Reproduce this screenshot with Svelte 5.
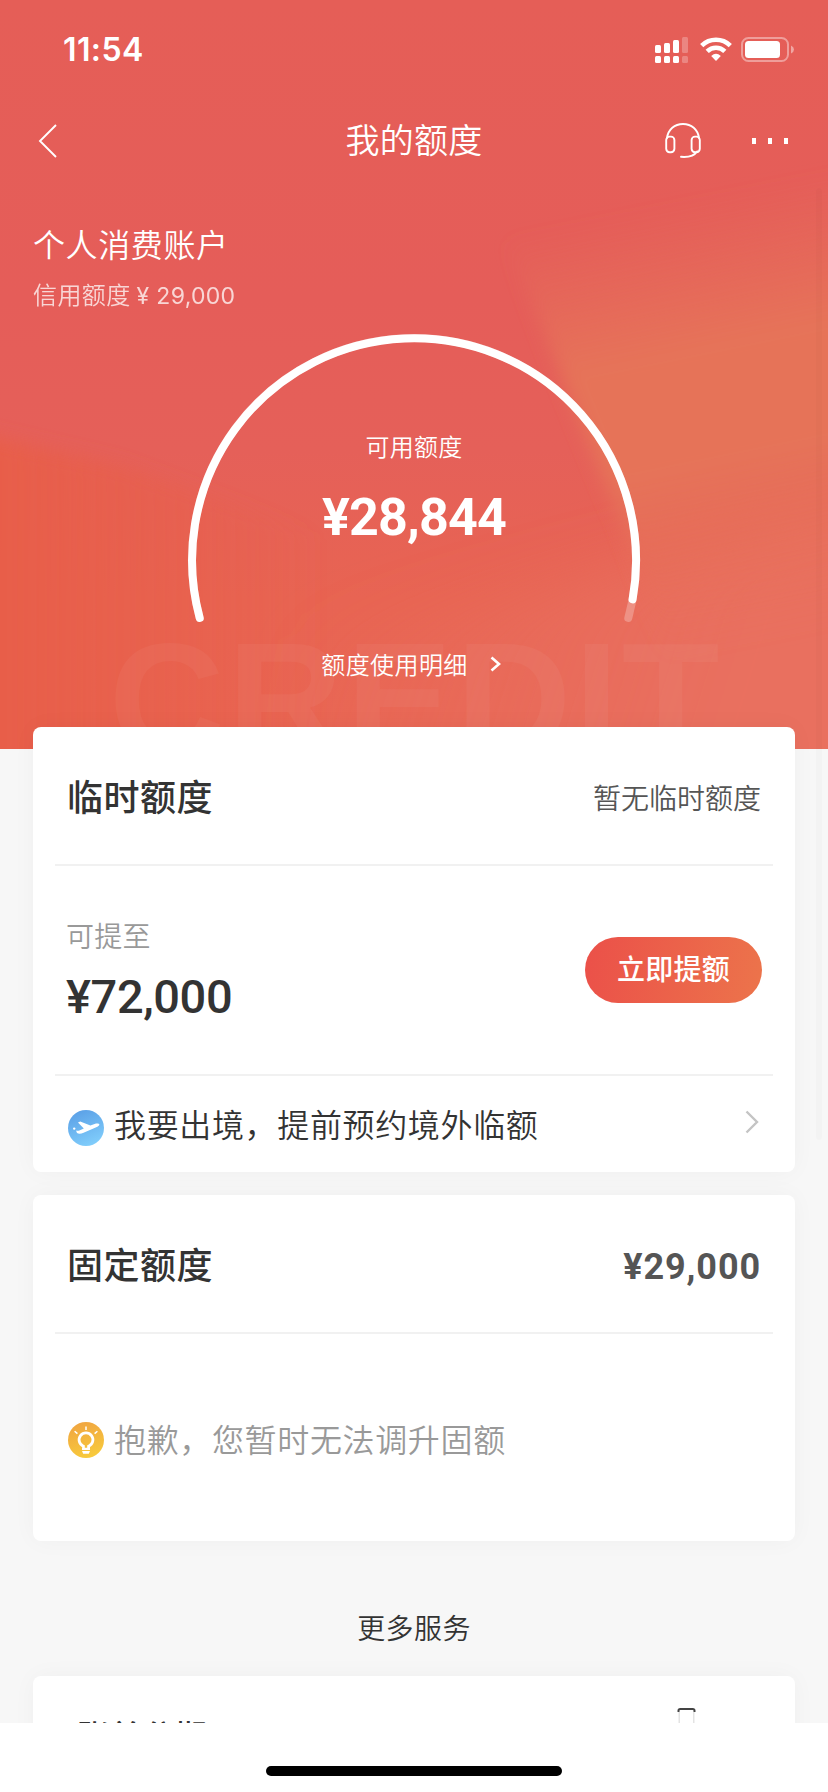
<script>
  const total = 29000
  const available = 28844

  const yuan = (n) => '¥' + n.toLocaleString('en-US')

  // barras de cobertura
  const bars = [
    { x: 0, top: 8, on: true },
    { x: 9, top: 6, on: true },
    { x: 18, top: 3, on: true },
    { x: 27, top: 0, on: false }
  ]
</script>

{#snippet chevron(w, h, stroke)}
  <svg width={w} height={h} viewBox="0 0 {w} {h}" fill="none" stroke="currentColor" stroke-width={stroke}>
    <path d="M1.5 1.5 L{w - 2} {h / 2} L1.5 {h - 1.5}" />
  </svg>
{/snippet}

<main class="screen">
  <section class="hero">
    <svg class="hero-bg" viewBox="0 0 828 749" preserveAspectRatio="none" aria-hidden="true">
      <defs>
        <linearGradient id="base" x1="0" y1="0" x2="0" y2="1">
          <stop offset="0" stop-color="#e55e57" />
          <stop offset="0.4" stop-color="#e55d59" />
          <stop offset="0.6" stop-color="#e56059" />
          <stop offset="0.8" stop-color="#e86452" />
          <stop offset="1" stop-color="#e96552" />
        </linearGradient>
        <linearGradient id="left" x1="0" y1="0" x2="1" y2="0">
          <stop offset="0.1" stop-color="#e85e49" />
          <stop offset="0.8" stop-color="#e85e49" stop-opacity="0" />
        </linearGradient>
        <linearGradient id="right" gradientUnits="userSpaceOnUse" x1="520" y1="235" x2="625" y2="749">
          <stop offset="0" stop-color="#e6705a" stop-opacity="0" />
          <stop offset="0.28" stop-color="#e67359" />
          <stop offset="0.5" stop-color="#e67359" />
          <stop offset="0.85" stop-color="#e86e5a" stop-opacity="0" />
        </linearGradient>
        <linearGradient id="corner" gradientUnits="userSpaceOnUse" x1="330" y1="520" x2="720" y2="640">
          <stop offset="0" stop-color="#e96f5f" stop-opacity="0" />
          <stop offset="1" stop-color="#e96f5f" />
        </linearGradient>
        <filter id="soft" x="-20%" y="-20%" width="140%" height="140%">
          <feGaussianBlur stdDeviation="9" />
        </filter>
        <filter id="softer" x="-30%" y="-30%" width="160%" height="160%">
          <feGaussianBlur stdDeviation="30" />
        </filter>
      </defs>
      <rect width="828" height="749" fill="url(#base)" />
      <path d="M-60 425 L120 465 L420 570 L420 830 L-60 830 Z" fill="url(#left)" filter="url(#soft)" />
      <path d="M300 640 L640 560 L920 470 L920 860 L300 860 Z" fill="url(#corner)" filter="url(#softer)" />
      <path d="M500 225 L640 165 L880 140 L880 790 L712 790 L620 520 L545 335 Z" fill="url(#right)" filter="url(#soft)" />
    </svg>
    <span class="watermark" aria-hidden="true">CREDIT</span>

    <div class="statusbar">
      <span class="time">11:54</span>
      <div class="status-icons">
        <svg width="33" height="27" viewBox="0 0 33 27" fill="#fff">
          {#each bars as b}
            <g opacity={b.on ? 1 : 0.25}>
              <rect x={b.x} y={b.top} width="6" height={16 - b.top} rx="1.5" />
              <rect x={b.x} y="19" width="6" height="7" rx="1.5" />
            </g>
          {/each}
        </svg>
        <svg class="wifi" width="32" height="24" viewBox="0 0 32 24" fill="none" stroke="#fff" stroke-width="4.6">
          <path d="M1.7 8.6 A20.5 20.5 0 0 1 30.3 8.6" />
          <path d="M7.2 14.4 A12.6 12.6 0 0 1 24.8 14.4" />
          <path d="M16 24 L11.2 18.9 Q16 14.8 20.8 18.9 Z" fill="#fff" stroke="none" />
        </svg>
        <svg class="battery" width="54" height="25" viewBox="0 0 54 25">
          <rect x="1" y="1" width="46" height="23" rx="6.5" fill="none" stroke="#fff" stroke-opacity="0.4" stroke-width="2" />
          <rect x="4" y="4" width="35" height="17" rx="3.5" fill="#fff" />
          <path d="M50 8.5 Q53 10 53 12.5 Q53 15 50 16.5 Z" fill="#fff" fill-opacity="0.45" />
        </svg>
      </div>
    </div>

    <nav class="navbar">
      <button class="icon-btn back" aria-label="返回">
        <svg width="20" height="34" viewBox="0 0 20 34" fill="none" stroke="#fff" stroke-width="1.9">
          <path d="M18 1 L2 17 L18 33" />
        </svg>
      </button>
      <h1>我的额度</h1>
      <div class="nav-actions">
        <button class="icon-btn" aria-label="客服">
          <svg width="38" height="38" viewBox="0 0 38 38" fill="none" stroke="#fff" stroke-width="1.9" stroke-linecap="round">
            <path d="M3 16 C4.2 7.5 10.5 2 19 2 C27.5 2 33.8 7.5 35 16" />
            <rect x="2.2" y="14.6" width="8.2" height="15.6" rx="3.4" />
            <rect x="27.6" y="14.6" width="8.2" height="15.6" rx="3.4" />
            <path d="M33 29.4 Q29 35.8 17 34.8" />
          </svg>
        </button>
        <button class="icon-btn dots" aria-label="更多"><i></i><i></i><i></i></button>
      </div>
    </nav>

    <header class="account">
      <h2>个人消费账户</h2>
      <p>信用额度<span class="limit">¥ {total.toLocaleString('en-US')}</span></p>
    </header>

    <div class="gauge">
      <svg class="gauge-arc" width="454" height="296" viewBox="187 330 454 296" fill="none" stroke="#fff" stroke-width="8" stroke-linecap="round">
        <path d="M199.7 618 A222 222 0 1 1 628.3 618" stroke-opacity="0.25" />
        <path d="M199.7 618 A222 222 0 1 1 632.6 599.4" />
      </svg>
      <div class="gauge-text">
        <span class="label">可用额度</span>
        <strong>{yuan(available)}</strong>
      </div>
    </div>

    <a class="detail" href="#detail">
      额度使用明细 {@render chevron(11, 16, 2.6)}
    </a>
  </section>

  <section class="card temp">
    <div class="card-head">
      <h3>临时额度</h3>
      <span class="none">暂无临时额度</span>
    </div>
    <div class="raise">
      <div class="raise-info">
        <span>可提至</span>
        <strong>{yuan(72000)}</strong>
      </div>
      <button class="raise-btn">立即提额</button>
    </div>
    <a class="notice" href="#abroad">
      <svg class="badge" width="36" height="36" viewBox="0 0 36 36">
        <defs>
          <linearGradient id="sky" x1="0.2" y1="0" x2="0.6" y2="1">
            <stop offset="0" stop-color="#5a9fe6" />
            <stop offset="1" stop-color="#80cdfb" />
          </linearGradient>
        </defs>
        <circle cx="18" cy="18" r="18" fill="url(#sky)" />
        <circle cx="6.2" cy="18.6" r="1.2" fill="#fff" />
        <path d="M8 20.6 Q9.6 21.2 11.4 20.4 L15.8 18.4 L10 12.4 L12.2 11.4 L22.4 15.6 L28 13.6 Q30.8 13 31.4 14.2 Q31.6 15.6 29.4 16.8 L15.6 22.8 Q11.4 24.4 9 23 Z" fill="#fff" />
      </svg>
      <span>我要出境，提前预约境外临额</span>
      <i class="arrow">{@render chevron(14, 24, 2.4)}</i>
    </a>
  </section>

  <section class="card fixed">
    <div class="card-head">
      <h3>固定额度</h3>
      <strong class="fixed-amount">{yuan(total)}</strong>
    </div>
    <div class="notice muted">
      <svg class="badge" width="36" height="36" viewBox="0 0 36 36" fill="none" stroke="#fff">
        <defs>
          <linearGradient id="sun" x1="0.3" y1="0" x2="0.6" y2="1">
            <stop offset="0" stop-color="#f0a541" />
            <stop offset="1" stop-color="#f8cb3c" />
          </linearGradient>
        </defs>
        <circle cx="18" cy="18" r="18" fill="url(#sun)" stroke="none" />
        <path d="M15.4 26.6 V24.2 A6.9 6.9 0 1 1 20.6 24.2 V26.6" stroke-width="2.8" />
        <path d="M14 25.8 H22 V28 H14 Z M14 29 H22 L20.8 31.8 H15.2 Z" fill="#fff" stroke="none" />
        <path d="M18 4.6 V8 M6.6 9.2 L9.4 11.6 M29.4 9.2 L26.6 11.6" stroke-width="1.5" />
      </svg>
      <span>抱歉，您暂时无法调升固额</span>
    </div>
  </section>

  <h4 class="more">更多服务</h4>

  <section class="card services">
    <span>账单分期</span>
    <svg width="20" height="34" viewBox="0 0 20 34" fill="none">
      <path d="M2.2 5 V30 M16.8 5 V30" stroke="#ddd" stroke-width="1.2" />
      <path d="M1.5 5 V3.6 Q1.5 1.9 3.2 1.9 H15.8 Q17.5 1.9 17.5 3.6 V5" stroke="#444" stroke-width="2" />
    </svg>
  </section>

  <footer class="home"><i></i></footer>
  <i class="scrollbar"></i>
</main>

<style>
  :global(body) {
    background: #fff;
  }
  .screen {
    position: relative;
    width: 828px;
    height: 1792px;
    overflow: hidden;
    display: flex;
    flex-direction: column;
    background: #f7f7f7;
    color: #333;
    font-family: "Noto Sans CJK SC", sans-serif;
    font-weight: 350;
  }
  h1, h2, h3, h4, p { margin: 0; font-weight: inherit; }
  a { color: inherit; text-decoration: none; }
  svg { display: block; flex: none; }
  button {
    border: 0;
    padding: 0;
    font-family: inherit;
    background: none;
    color: #fff;
    cursor: pointer;
  }

  .hero {
    position: relative;
    flex: none;
    height: 749px;
    overflow: hidden;
    color: #fff;
    display: flex;
    flex-direction: column;
  }
  .hero > * { position: relative; }
  .hero > .hero-bg {
    position: absolute;
    inset: 0;
    width: 100%;
    height: 100%;
  }
  .hero > .watermark {
    position: absolute;
    left: 109px;
    top: 611px;
    font: 700 160px/1.1 "Liberation Sans", sans-serif;
    letter-spacing: 3px;
    color: rgba(255, 255, 255, 0.045);
  }

  .statusbar {
    flex: none;
    height: 100px;
    display: flex;
    justify-content: space-between;
    padding: 0 33px 0 63px;
    box-sizing: border-box;
  }
  .time {
    font: 600 32px/100px Inter, sans-serif;
    letter-spacing: 0.4px;
  }
  .status-icons {
    display: flex;
    align-items: flex-start;
    padding-top: 37px;
  }
  .wifi { margin-left: 12px; }
  .battery { margin-left: 9px; }

  .navbar {
    flex: none;
    height: 82px;
    display: grid;
    grid-template-columns: 1fr auto 1fr;
    align-items: center;
    padding: 0 38px;
  }
  .icon-btn { display: flex; }
  .navbar h1 {
    font-size: 34px;
    line-height: 78px;
    letter-spacing: 0.3px;
    margin-top: -5px;
  }
  .nav-actions {
    display: flex;
    justify-content: flex-end;
    align-items: center;
    gap: 50px;
  }
  .dots { gap: 12px; padding-right: 2px; }
  .dots i {
    width: 4px;
    height: 6px;
    background: #fff;
  }

  .account {
    padding: 38px 33px 0;
    height: 152px;
    box-sizing: border-box;
    flex: none;
  }
  .account h2 {
    font-size: 32px;
    line-height: 46px;
    letter-spacing: 0.6px;
  }
  .account p {
    font-size: 24px;
    line-height: 36px;
    margin-top: 10px;
    letter-spacing: 0.4px;
    opacity: 0.75;
  }
  .limit {
    font-family: Inter, sans-serif;
    font-size: 23px;
    font-weight: 400;
    margin-left: 6px;
    letter-spacing: 0.3px;
  }

  .gauge {
    flex: none;
    display: grid;
    justify-items: center;
    margin-top: -4px;
  }
  .gauge > * { grid-area: 1 / 1; }
  .gauge-text {
    display: flex;
    flex-direction: column;
    align-items: center;
    padding-top: 99px;
  }
  .label {
    font-size: 24px;
    line-height: 34px;
    letter-spacing: 0.3px;
  }
  .gauge-text strong {
    font: 700 52px/60px Roboto, sans-serif;
    letter-spacing: -0.8px;
    margin-top: 25px;
  }
  .detail {
    display: flex;
    justify-content: center;
    align-items: center;
    gap: 22px;
    padding-right: 6px;
    margin-top: 20px;
    font-size: 24px;
    line-height: 36px;
    letter-spacing: 0.4px;
  }

  .card {
    position: relative;
    flex: none;
    margin: 0 33px;
    background: #fff;
    border-radius: 8px;
    box-shadow: 0 0 24px rgba(0, 0, 0, 0.035);
  }
  .temp { margin-top: -22px; height: 445px; }
  .fixed { margin-top: 23px; height: 346px; }
  .card-head {
    height: 137px;
    margin: 0 22px;
    padding: 0 12px;
    display: flex;
    justify-content: space-between;
    align-items: center;
    border-bottom: 2px solid #f1f1f1;
  }
  .card-head h3 {
    font-size: 36px;
    font-weight: 500;
    letter-spacing: 0.5px;
    margin-top: -2px;
  }
  .none {
    font-size: 28px;
    color: #555;
    margin-top: 2px;
  }
  .fixed-amount {
    font: 700 36px/44px Roboto, sans-serif;
    color: #555;
    letter-spacing: 0.9px;
    margin-top: 7px;
  }
  .raise {
    height: 208px;
    margin: 0 22px;
    padding: 0 11px;
    display: flex;
    justify-content: space-between;
    align-items: center;
    border-bottom: 2px solid #f1f1f1;
  }
  .raise-info { display: flex; flex-direction: column; }
  .raise-info span {
    font-size: 28px;
    line-height: 40px;
    color: #999;
    letter-spacing: 0.3px;
  }
  .raise-info strong {
    font: 500 47px/56px Roboto, sans-serif;
    letter-spacing: -0.4px;
    margin-top: 14px;
  }
  .raise-btn {
    width: 177px;
    height: 66px;
    border-radius: 33px;
    font-size: 28px;
    font-weight: 500;
    line-height: 60px;
    padding-bottom: 4px;
    letter-spacing: 0.3px;
    background: linear-gradient(100deg, #eb5049, #ec744b);
  }
  .notice {
    display: flex;
    align-items: center;
    height: 96px;
    padding: 7px 36px 0 35px;
    box-sizing: border-box;
    font-size: 32px;
    letter-spacing: 0.65px;
  }
  .notice span { margin: -10px auto 0 10px; }
  .arrow { color: #c4c4c4; margin-top: -11px; }
  .notice.muted {
    height: 207px;
    color: #999;
    padding-top: 5px;
  }
  .muted span { margin-top: -4px; }
  .more {
    flex: none;
    font-size: 28px;
    line-height: 40px;
    letter-spacing: 0.4px;
    text-align: center;
    margin: 66px 0 29px;
  }
  .services {
    height: 140px;
    display: flex;
    justify-content: space-between;
    align-items: flex-start;
    padding: 31px 98px 0 44px;
  }
  .services span {
    font-size: 32px;
    font-weight: 500;
    line-height: 48px;
    letter-spacing: 0.7px;
    margin-top: 3px;
  }

  .home {
    position: absolute;
    left: 0;
    right: 0;
    bottom: 0;
    height: 69px;
    background: #fff;
    display: flex;
    justify-content: center;
    align-items: flex-end;
    padding-bottom: 16px;
    box-sizing: border-box;
  }
  .home i {
    width: 296px;
    height: 10px;
    border-radius: 5px;
    background: #000;
  }
  .scrollbar {
    position: absolute;
    left: 816px;
    top: 188px;
    width: 6px;
    height: 952px;
    border-radius: 3px;
    background: rgba(0, 0, 0, 0.015);
  }
</style>
